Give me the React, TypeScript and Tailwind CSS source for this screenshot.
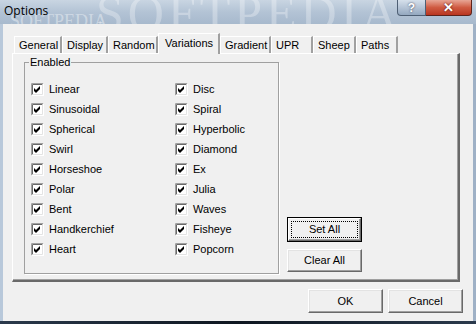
import React from 'react';

const tabs = [
  { label: 'General', w: 'w-[48px]' },
  { label: 'Display', w: 'w-[46px]' },
  { label: 'Random', w: 'w-[50px]' },
  { label: 'Variations', w: 'w-[62px]', active: true },
  { label: 'Gradient', w: 'w-[51px]' },
  { label: 'UPR', w: 'w-[42px]' },
  { label: 'Sheep', w: 'w-[43px]' },
  { label: 'Paths', w: 'w-[42px]' },
];

const colA = ['Linear', 'Sinusoidal', 'Spherical', 'Swirl', 'Horseshoe', 'Polar', 'Bent', 'Handkerchief', 'Heart'];
const colB = ['Disc', 'Spiral', 'Hyperbolic', 'Diamond', 'Ex', 'Julia', 'Waves', 'Fisheye', 'Popcorn'];

// caixa de seleção no estilo clássico do Windows
const CheckBox: React.FC = () => (
  <svg width="13" height="13" viewBox="0 0 13 13" className="shrink-0">
    <rect x="0" y="0" width="13" height="13" fill="#ffffff" />
    <path d="M0.5 12.5 V0.5 H12.5" stroke="#a0a0a0" fill="none" />
    <path d="M1.5 11.5 V1.5 H11.5" stroke="#696969" fill="none" />
    <path d="M0.5 12.5 H12.5 V0.5" stroke="#ffffff" fill="none" />
    <path d="M1.5 11.5 H11.5 V1.5" stroke="#e3e3e3" fill="none" />
    <polygon points="3,5 5,7 9,3 9,6 5,10 3,8" fill="#000000" />
  </svg>
);

const CheckRow: React.FC<{ label: string }> = ({ label }) => (
  <div className="h-[20px] flex items-center gap-[5px]">
    <CheckBox />
    <span className="leading-[13px]">{label}</span>
  </div>
);

const Btn: React.FC<{ label: string; def?: boolean; h?: string }> = ({ label, def, h = 'h-[24px]' }) =>
  def ? (
    <div className={`w-[75px] ${h} border border-black flex`}>
      <div className="flex-1 flex border-t border-l border-t-white border-l-white border-b border-r border-b-[#696969] border-r-[#696969] bg-[#f0f0f0] shadow-[inset_-1px_-1px_0_#a0a0a0]">
        <div className="flex-1 m-[2px] border border-dotted border-black flex items-center justify-center">{label}</div>
      </div>
    </div>
  ) : (
    <div className={`w-[75px] ${h} flex items-center justify-center bg-[#f0f0f0] border-t border-l border-t-white border-l-white border-b border-r border-b-[#696969] border-r-[#696969] shadow-[inset_-1px_-1px_0_#a0a0a0,inset_1px_1px_0_#e3e3e3]`}>
      {label}
    </div>
  );

const App: React.FC = () => {
  return (
    <div className="w-[476px] h-[324px] flex flex-col overflow-hidden bg-[#b9c8d9] font-['Liberation_Sans',Arial,sans-serif] text-[11px] text-black">
      {/* barra de título */}
      <div className="relative h-[24px] flex shrink-0 bg-gradient-to-b from-[#c9d5e2] via-[#b3c3d5] to-[#a7b9cd] overflow-hidden">
        <span className="absolute left-[96px] top-[-12px] font-['Liberation_Serif',serif] text-[50px] leading-[50px] tracking-[4px] text-white/30 select-none">SOFTPEDIA</span>
        <span className="absolute left-[10px] top-[12px] font-['Liberation_Serif',serif] text-[18px] leading-[18px] text-white/40 select-none">SOFTPEDIA</span>
        <span className="relative pl-[4px] pt-[3px] font-['Open_Sans',sans-serif] text-[12px] leading-[16px] text-black">Options</span>
        <div className="relative ml-auto mr-[4px] flex h-[16px]">
          <div className="w-[29px] h-full rounded-bl-[4px] border border-[#4e5f74] border-t-0 bg-gradient-to-b from-[#d6e0eb] via-[#b5c4d6] to-[#94a8bf] flex items-center justify-center text-white font-bold text-[12px] leading-[12px] [text-shadow:0_0_2px_#334]">?</div>
          <div className="w-[46px] h-full rounded-br-[4px] border border-l-0 border-[#5d231b] border-t-0 bg-gradient-to-b from-[#e7a595] via-[#cf5a41] to-[#b93520] flex items-center justify-center text-white font-bold text-[13px] leading-[12px] [text-shadow:0_0_2px_#400]">✕</div>
        </div>
      </div>

      <div className="flex flex-1">
        <div className="w-[3px] bg-[#b8c8da]" />
        {/* área do cliente */}
        <div className="w-[470px] bg-[#f0f0f0] flex flex-col pl-[9px] pt-[9px]">
          <div className="flex items-end h-[20px] pl-[2px]">
            {tabs.map(t =>
              t.active ? (
                <div key={t.label} className={`${t.w} h-[21px] -mb-[1px] relative z-10 bg-[#f0f0f0] border-t border-l border-white border-r-2 border-r-[#a0a0a0] pl-[6px] pt-[3px] leading-[13px]`}>
                  {t.label}
                </div>
              ) : (
                <div key={t.label} className={`${t.w} h-[17px] bg-[#f0f0f0] border-t border-l border-white border-r-2 border-r-[#a0a0a0] pl-[4px] pt-[2px] leading-[13px]`}>
                  {t.label}
                </div>
              )
            )}
          </div>

          {/* painel da aba */}
          <div className="w-[448px] h-[229px] border-t border-l border-white border-r-2 border-b-2 border-r-[#696969] border-b-[#696969] shadow-[inset_-1px_-1px_0_#a0a0a0] flex pl-[11px] pt-[8px]">
            <div className="relative w-[255px] h-[212px] border border-[#a0a0a0] shadow-[1px_1px_0_#ffffff] flex pl-[6px] pt-[16px]">
              <span className="absolute left-[4px] -top-[7px] px-[1px] bg-[#f0f0f0] leading-[13px]">Enabled</span>
              <div className="w-[144px] flex flex-col">
                {colA.map(l => <CheckRow key={l} label={l} />)}
              </div>
              <div className="flex flex-col">
                {colB.map(l => <CheckRow key={l} label={l} />)}
              </div>
            </div>
            <div className="ml-[8px] mt-[155px] flex flex-col gap-[7px]">
              <Btn label="Set All" def h="h-[25px]" />
              <Btn label="Clear All" h="h-[23px]" />
            </div>
          </div>

          <div className="flex justify-end gap-[5px] mt-[7px] pr-[10px]">
            <Btn label="OK" />
            <Btn label="Cancel" />
          </div>
        </div>
        <div className="w-[3px] bg-[#9fb1c6]" />
      </div>
      <div className="h-[3px] bg-gradient-to-r from-[#2b3a4c] via-[#0e1620] to-[#2b3a4c]" />
    </div>
  );
};

export default App;
